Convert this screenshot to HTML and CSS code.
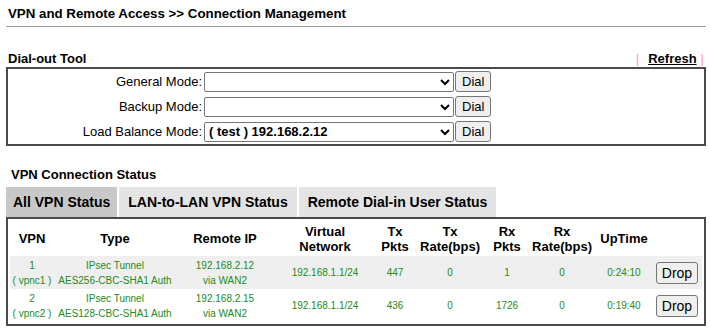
FILE: index.html
```html
<!DOCTYPE html>
<html lang="en">
<head>
  <meta charset="UTF-8" />
  <title>Connection Management</title>
  <link rel="stylesheet" href="styles.css">
</head>
<body>

<div class="page-title">VPN and Remote Access &gt;&gt; Connection Management</div>
<hr class="rule">

<!-- Dial-out tool -->
<div class="section-head">
  <span class="section-title">Dial-out Tool</span>
  <span class="links"><span class="bar">|</span><a href="#" class="refresh">Refresh</a><span class="bar">|</span></span>
</div>
<div class="dial-box">
  <label class="mode-label">General Mode:</label>
  <div class="mode-ctrl">
    <select class="mode-select"><option></option></select>
    <button class="btn">Dial</button>
  </div>
  <label class="mode-label">Backup Mode:</label>
  <div class="mode-ctrl">
    <select class="mode-select"><option></option></select>
    <button class="btn">Dial</button>
  </div>
  <label class="mode-label">Load Balance Mode:</label>
  <div class="mode-ctrl">
    <select class="mode-select bold"><option>( test ) 192.168.2.12</option></select>
    <button class="btn">Dial</button>
  </div>
</div>

<!-- VPN status -->
<div class="status-title">VPN Connection Status</div>
<div class="tabs">
  <div class="tab active">All VPN Status</div>
  <div class="tab">LAN-to-LAN VPN Status</div>
  <div class="tab">Remote Dial-in User Status</div>
</div>
<div class="status-box">
  <table class="status">
    <colgroup>
      <col style="width:44px"><col style="width:122px"><col style="width:98px"><col style="width:102px">
      <col style="width:38px"><col style="width:72px"><col style="width:42px"><col style="width:68px">
      <col style="width:56px"><col style="width:50px">
    </colgroup>
    <thead>
      <tr>
        <th>VPN</th>
        <th>Type</th>
        <th>Remote IP</th>
        <th>Virtual<br>Network</th>
        <th>Tx<br>Pkts</th>
        <th>Tx<br>Rate(bps)</th>
        <th>Rx<br>Pkts</th>
        <th>Rx<br>Rate(bps)</th>
        <th>UpTime</th>
        <th></th>
      </tr>
    </thead>
    <tbody>
      <tr class="odd">
        <td>1<br>( vpnc1 )</td>
        <td>IPsec Tunnel<br>AES256-CBC-SHA1 Auth</td>
        <td>192.168.2.12<br>via WAN2</td>
        <td>192.168.1.1/24</td>
        <td>447</td>
        <td>0</td>
        <td>1</td>
        <td>0</td>
        <td>0:24:10</td>
        <td><button class="btn drop">Drop</button></td>
      </tr>
      <tr>
        <td>2<br>( vpnc2 )</td>
        <td>IPsec Tunnel<br>AES128-CBC-SHA1 Auth</td>
        <td>192.168.2.15<br>via WAN2</td>
        <td>192.168.1.1/24</td>
        <td>436</td>
        <td>0</td>
        <td>1726</td>
        <td>0</td>
        <td>0:19:40</td>
        <td><button class="btn drop">Drop</button></td>
      </tr>
    </tbody>
  </table>
</div>

</body>
</html>
```

FILE: styles.css
```css
body {
  margin: 0;
  padding: 0 4px 0 6px;
  background: #fff;
  color: #000;
  font-family: 'Liberation Sans', Arial, sans-serif;
  font-size: 13px;
}
.page-title {
  font-weight: bold;
  font-size: 13.3px;
  padding: 6px 0 0 2px;
  line-height: 15px;
}
.rule {
  border: 0;
  border-top: 1px solid #a0a0a0;
  margin: 5px 0 0 0;
}
.section-head {
  display: flex;
  justify-content: space-between;
  align-items: flex-end;
  margin-top: 22px;
  padding: 0 2px;
  line-height: 16px;
  height: 18px;
}
.section-title {
  font-weight: bold;
}
.links {
  font-weight: bold;
}
.bar {
  color: #ff99bb;
  font-weight: normal;
}
.refresh {
  color: #000;
  margin: 0 4px 0 9px;
}
.dial-box {
  border: 2px solid #4a4a4a;
  display: grid;
  grid-template-columns: 196px 1fr;
  grid-auto-rows: 25px;
  align-items: center;
}
.mode-label {
  text-align: right;
  padding-right: 2px;
}
.mode-ctrl {
  display: flex;
  align-items: center;
  gap: 1px;
}
.mode-select {
  width: 250px;
  height: 20px;
  font-family: 'Liberation Sans', Arial, sans-serif;
  font-size: 13px;
  border: 1px solid #767676;
  border-radius: 2px;
  background: #fff;
}
.mode-select.bold {
  font-weight: bold;
}
.btn {
  font-family: 'Liberation Sans', Arial, sans-serif;
  font-size: 13px;
  height: 21px;
  padding: 0 6px;
  background: #efefef;
  border: 1px solid #767676;
  border-radius: 3px;
  color: #000;
}
.status-title {
  font-weight: bold;
  margin-top: 21px;
  padding-left: 5px;
  line-height: 16px;
}
.tabs {
  display: flex;
  gap: 2px;
  margin-top: 4px;
}
.tab {
  background: #e4e4e4;
  font-weight: bold;
  font-size: 14px;
  line-height: 30px;
  padding: 0 9px;
}
.tab.active {
  background: #c8c8c8;
  padding: 0 7px;
}
.status-box {
  border: 2px solid #4a4a4a;
  padding: 2px;
  width: 692px;
}
.status {
  table-layout: fixed;
  border-collapse: collapse;
  width: 692px;
}
.status th {
  font-size: 13px;
  line-height: 15px;
  height: 35px;
  padding: 0;
  text-align: center;
}
.status td {
  font-size: 10px;
  line-height: 15px;
  color: #228b22;
  text-align: center;
  height: 33px;
  padding: 0;
}
.status tr.odd td {
  background: #efefef;
}
.drop {
  font-size: 14px;
  height: 22px;
  padding: 0 5px;
}
```
